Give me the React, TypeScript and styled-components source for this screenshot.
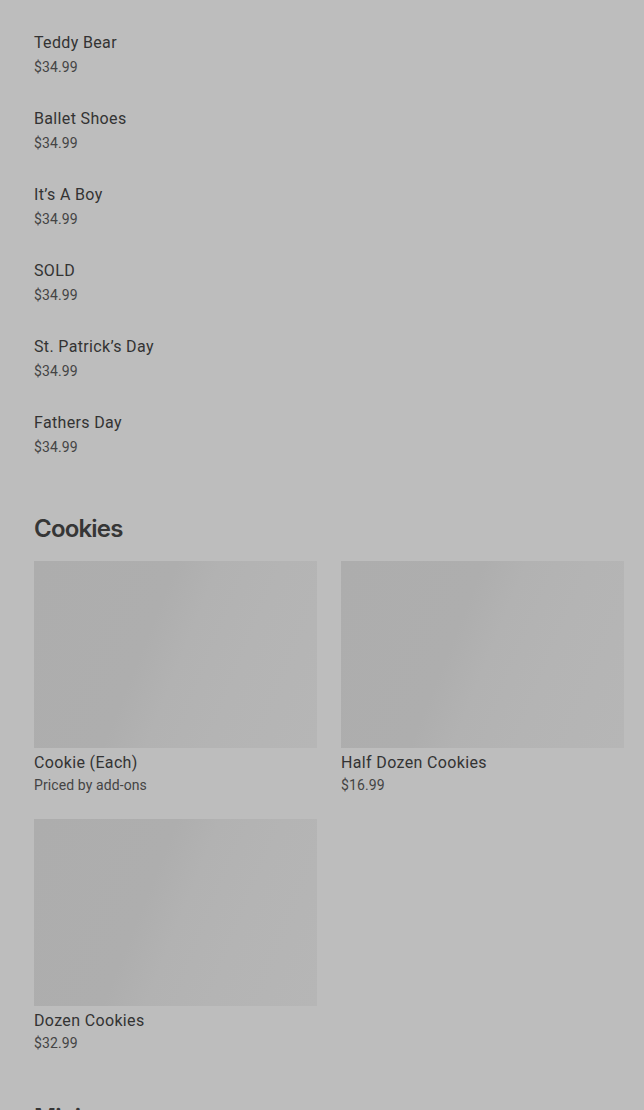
import React from "react";
import styled, { createGlobalStyle } from "styled-components";

const Global = createGlobalStyle`
  html, body { margin: 0; padding: 0; background: #bdbdbd; }
  body { font-family: Roboto, "Liberation Sans", sans-serif; -webkit-font-smoothing: antialiased; }
`;

const Page = styled.div`
  padding: 31px 20px 0 34px;
  height: 1110px;
  overflow: hidden;
  box-sizing: border-box;
`;

const List = styled.div`
  display: flex;
  flex-direction: column;
  gap: 30px;
`;

const Item = styled.div`
  display: flex;
  flex-direction: column;
  gap: 2px;
`;

const Title = styled.div`
  font-size: 16px;
  line-height: 24px;
  font-weight: 400;
  letter-spacing: 0.35px;
  color: #333;
`;

const Price = styled.div`
  font-size: 14px;
  line-height: 20px;
  font-weight: 400;
  letter-spacing: 0.1px;
  color: #444;
`;

const Section = styled.section<{ $top: number }>`
  margin-top: ${(p) => p.$top}px;
`;

const Heading = styled.h2`
  margin: 0 0 16px;
  font-family: Inter, "Noto Sans", sans-serif;
  font-size: 24px;
  line-height: 32px;
  font-weight: 600;
  letter-spacing: -0.8px;
  color: #363636;
`;

const Grid = styled.div`
  display: grid;
  grid-template-columns: 1fr 1fr;
  column-gap: 24px;
  row-gap: 24px;
`;

const Card = styled.div`
  display: flex;
  flex-direction: column;
`;

const Thumb = styled.div`
  height: 187px;
  margin-bottom: 3px;
  background: linear-gradient(
    112deg,
    #adadad 0%,
    #aeaeae 40%,
    #b2b2b2 52%,
    #b4b4b4 70%,
    #b6b6b6 100%
  );
`;

const singles = [
  "Teddy Bear",
  "Ballet Shoes",
  "It\u2019s A Boy",
  "SOLD",
  "St. Patrick\u2019s Day",
  "Fathers Day",
];

const cookies = [
  { name: "Cookie (Each)", price: "Priced by add-ons" },
  { name: "Half Dozen Cookies", price: "$16.99" },
  { name: "Dozen Cookies", price: "$32.99" },
];

export default function App() {
  return (
    <>
      <Global />
      <Page>
        <List>
          {singles.map((s) => (
            <Item key={s}>
              <Title>{s}</Title>
              <Price>$34.99</Price>
            </Item>
          ))}
        </List>
        <Section $top={56}>
          <Heading>Cookies</Heading>
          <Grid>
            {cookies.map((c) => (
              <Card key={c.name}>
                <Thumb />
                <Title>{c.name}</Title>
                <Price>{c.price}</Price>
              </Card>
            ))}
          </Grid>
        </Section>
        <Section $top={49}>
          <Heading>Minis</Heading>
        </Section>
      </Page>
    </>
  );
}
